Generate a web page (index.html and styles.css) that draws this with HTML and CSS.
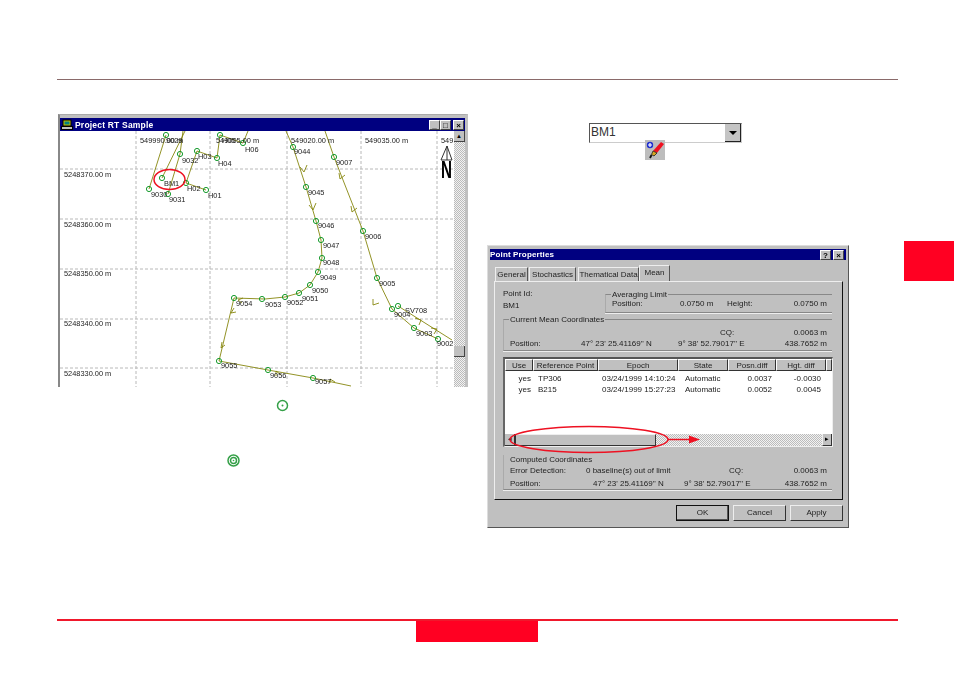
FILE: index.html
```html
<!DOCTYPE html>
<html lang="en">
<head>
<meta charset="utf-8">
<title>Project RT Sample</title>
<link rel="stylesheet" href="styles.css">
</head>
<body>
<div class="page">
  <div class="top-rule"></div>
  <main class="main">
    <section class="left-col">
      <div class="map-window">
        <div class="win-title">
          <svg class="win-icon" viewBox="0 0 12 11"><rect x="2" y="1" width="8" height="6" fill="#c0c000" stroke="#000"/><rect x="3.500" y="2.500" width="5" height="3" fill="#008080"/><rect x="0.500" y="7.500" width="11" height="3" fill="#c0c0c0" stroke="#000"/></svg>
          <span class="win-title-text">Project RT Sample</span>
          <span class="win-btns">
            <span class="win-btn">_</span><span class="win-btn">□</span><span class="win-btn win-close">×</span>
          </span>
        </div>
        <div class="map-body">
          <svg class="map" viewBox="60 131 394 256" width="394" height="256">
            <g class="grid">
              <path d="M60 169H454M60 219H454M60 269H454M60 319H454M60 368H454"/>
              <path d="M136 131V387M210 131V387M287 131V387M361 131V387M437 131V387"/>
            </g>
            <g class="tracks">
              <path d="M149 189L166 135M162 178L185 131M168 194L180 154L183 131M186 183L197 151"/>
              <path d="M186 183L206 190M197 151L217 158L220 135M220 135L243 143L248 131"/>
              <path d="M286 131L293 147L306 187L316 221L321 240L322 258L318 272L310 285L299 293L285 297L265 299L234 298L219 361L268 370L313 378L351 386"/>
              <path d="M325 131L334 157L363 231L377 278L392 309L414 328L438 339M398 306L452 340"/>
              <path d="M300 167l4 5l3-7M309 205l4 5l3-7M339 173l1 6l5-4M351 206l1 6l5-4M373 299l0 6l6-2M415 318l6 2l-2 5M431 328l6 1l-3 5M234 308l-3 5l5-1M222 342l-1 6l4-3M243 298l-5 2l4 3M281 375l-5-4l0 5M335 382l-5-3l0 4"/>
            </g>
            <g class="nodes">
              <circle cx="166" cy="135" r="2.600"/><circle cx="180" cy="154" r="2.600"/><circle cx="197" cy="151" r="2.600"/>
              <circle cx="217" cy="158" r="2.600"/><circle cx="220" cy="135" r="2.600"/><circle cx="243" cy="143" r="2.600"/>
              <circle cx="162" cy="178" r="2.600"/><circle cx="186" cy="183" r="2.600"/><circle cx="206" cy="190" r="2.600"/>
              <circle cx="149" cy="189" r="2.600"/><circle cx="168" cy="194" r="2.600"/><circle cx="293" cy="147" r="2.600"/>
              <circle cx="334" cy="157" r="2.600"/><circle cx="306" cy="187" r="2.600"/><circle cx="316" cy="221" r="2.600"/>
              <circle cx="321" cy="240" r="2.600"/><circle cx="322" cy="258" r="2.600"/><circle cx="363" cy="231" r="2.600"/>
              <circle cx="377" cy="278" r="2.600"/><circle cx="318" cy="272" r="2.600"/><circle cx="310" cy="285" r="2.600"/>
              <circle cx="299" cy="293" r="2.600"/><circle cx="285" cy="297" r="2.600"/><circle cx="262" cy="299" r="2.600"/>
              <circle cx="234" cy="298" r="2.600"/><circle cx="219" cy="361" r="2.600"/><circle cx="268" cy="370" r="2.600"/>
              <circle cx="313" cy="378" r="2.600"/><circle cx="392" cy="309" r="2.600"/><circle cx="398" cy="306" r="2.600"/>
              <circle cx="414" cy="328" r="2.600"/><circle cx="438" cy="339" r="2.600"/>
            </g>
            <g class="labels">
              <text x="64" y="177">5248370.00 m</text><text x="64" y="227">5248360.00 m</text><text x="64" y="276">5248350.00 m</text>
              <text x="64" y="326">5248340.00 m</text><text x="64" y="376">5248330.00 m</text>
              <text x="140" y="143">549990.00 m</text><text x="216" y="143">549005.00 m</text><text x="291" y="143">549020.00 m</text>
              <text x="365" y="143">549035.00 m</text><text x="441" y="143">549</text>
              <text x="166" y="143">9029</text><text x="182" y="163">9032</text><text x="198" y="159">H03</text>
              <text x="218" y="166">H04</text><text x="222" y="143">H05</text><text x="245" y="152">H06</text>
              <text x="164" y="186">BM1</text><text x="187" y="191">H02</text><text x="208" y="198">H01</text>
              <text x="151" y="197">9030</text><text x="169" y="202">9031</text>
              <text x="294" y="154">9044</text><text x="336" y="165">9007</text><text x="308" y="195">9045</text>
              <text x="318" y="228">9046</text><text x="323" y="248">9047</text><text x="323" y="265">9048</text>
              <text x="365" y="239">9006</text><text x="379" y="286">9005</text><text x="320" y="280">9049</text>
              <text x="312" y="293">9050</text><text x="302" y="301">9051</text><text x="287" y="305">9052</text>
              <text x="265" y="307">9053</text><text x="236" y="306">9054</text><text x="221" y="368">9055</text>
              <text x="270" y="378">9056</text><text x="315" y="384">9057</text><text x="394" y="317">9004</text>
              <text x="405" y="313">SV708</text><text x="416" y="336">9003</text><text x="437" y="346">9002</text>
            </g>
            <g class="north">
              <path d="M447 146L441 160H452Z"/>
              <path d="M447 146V160"/>
              <text class="north-n" x="441" y="178" textLength="11" lengthAdjust="spacingAndGlyphs">N</text>
            </g>
            <ellipse class="callout" cx="169.500" cy="179.500" rx="15.500" ry="10"/>
          </svg>
          <div class="v-scroll">
            <span class="sb-btn">▲</span>
            <span class="sb-thumb"></span>
          </div>
        </div>
      </div>
      <svg class="status-icon status-one" viewBox="0 0 13 13"><circle cx="6.500" cy="6.500" r="5" fill="none" stroke="#35a048" stroke-width="1.500"/><circle cx="6.500" cy="6.500" r="1" fill="#35a048"/></svg>
      <svg class="status-icon status-two" viewBox="0 0 13 13"><circle cx="6.500" cy="6.500" r="5.500" fill="none" stroke="#35a048" stroke-width="1.500"/><circle cx="6.500" cy="6.500" r="3" fill="none" stroke="#35a048" stroke-width="1.500"/><circle cx="6.500" cy="6.500" r="0.800" fill="#35a048"/></svg>
    </section>

    <section class="right-col">
      <div class="combo">
        <span class="combo-text">BM1</span>
        <span class="combo-btn"><span class="combo-arrow"></span></span>
      </div>
      <svg class="pen-icon" viewBox="0 0 20 20">
        <rect width="20" height="20" fill="#bdbdbd"/>
        <path d="M16 2L19 4L12 13L8 11Z" fill="#f01020"/>
        <path d="M8 11L12 13L9 16L6.500 14.500Z" fill="#d8a820" stroke="#222" stroke-width="0.800"/>
        <path d="M6.500 15L5 18" stroke="#111" stroke-width="1.800"/>
        <circle cx="5" cy="5" r="3.200" fill="#2030d0"/>
        <path d="M3 5H7M5 3V7" stroke="#fff" stroke-width="1.200"/>
      </svg>

      <div class="dialog">
        <div class="dlg-title">
          <span class="dlg-title-text">Point Properties</span>
          <span class="win-btns dlg-btns"><span class="win-btn">?</span><span class="win-btn win-close">×</span></span>
        </div>
        <div class="tabs">
          <span class="tab tab-general">General</span>
          <span class="tab tab-stoch">Stochastics</span>
          <span class="tab tab-them">Thematical Data</span>
          <span class="tab tab-mean">Mean</span>
        </div>
        <div class="pane">
          <div class="top-row">
            <div class="point-id"><div>Point Id:</div><div>BM1</div></div>
            <div class="group group-avg">
              <span class="legend">Averaging Limit</span>
              <div class="avg-row">
                <span>Position:</span><span>0.0750 m</span><span>Height:</span><span class="num">0.0750 m</span>
              </div>
            </div>
          </div>
          <div class="group group-mean">
            <span class="legend">Current Mean Coordinates</span>
            <div class="coord-grid">
              <span></span><span></span><span class="cq">CQ:</span><span class="num">0.0063 m</span>
              <span>Position:</span><span>47° 23' 25.41169'' N</span><span>9° 38' 52.79017'' E</span><span class="num">438.7652 m</span>
            </div>
          </div>
          <div class="list">
            <div class="list-head">
              <span class="th">Use</span><span class="th">Reference Point</span><span class="th">Epoch</span><span class="th">State</span><span class="th">Posn.diff</span><span class="th">Hgt. diff</span><span class="th"></span>
            </div>
            <div class="list-body">
              <div class="list-row"><span class="c-use">yes</span><span class="c-ref">TP306</span><span class="c-date">03/24/1999 14:10:24</span><span class="c-state">Automatic</span><span class="c-pos">0.0037</span><span class="c-hgt">-0.0030</span></div>
              <div class="list-row"><span class="c-use">yes</span><span class="c-ref">B215</span><span class="c-date">03/24/1999 15:27:23</span><span class="c-state">Automatic</span><span class="c-pos">0.0052</span><span class="c-hgt">0.0045</span></div>
            </div>
            <div class="h-scroll">
              <span class="hs-btn">◂</span><span class="hs-thumb"></span><span class="hs-track"></span><span class="hs-btn hs-right">▸</span>
            </div>
          </div>
          <div class="group group-comp">
            <span class="legend legend-comp">Computed Coordinates</span>
            <div class="coord-grid coord-comp">
              <span>Error Detection:</span><span>0 baseline(s) out of limit</span><span class="cq-comp">CQ:</span><span class="num">0.0063 m</span>
              <span>Position:</span><span class="lat">47° 23' 25.41169'' N</span><span>9° 38' 52.79017'' E</span><span class="num">438.7652 m</span>
            </div>
          </div>
        </div>
        <div class="dlg-buttons">
          <span class="btn btn-default">OK</span><span class="btn">Cancel</span><span class="btn">Apply</span>
        </div>
        <svg class="dlg-callout" viewBox="0 0 200 30" width="200" height="30">
          <ellipse cx="80" cy="14.500" rx="79" ry="13"/>
          <path d="M159 14.500H182"/>
          <path class="arrow-head" d="M180 10.500L191 14.500L180 18.500Z"/>
        </svg>
      </div>
    </section>

    <aside class="side-tab"></aside>
  </main>
  <footer class="footer">
    <div class="bottom-rule"></div>
    <div class="bottom-tab"></div>
  </footer>
</div>
</body>
</html>
```
FILE: styles.css
```css
* { box-sizing: border-box; }
html, body { margin: 0; padding: 0; background: #fff; }
body { font-family: "Liberation Sans", Arial, sans-serif; font-size: 8px; color: #222; overflow: hidden; }
.page { width: 954px; height: 673px; padding-top: 79px; }
.top-rule { height: 1px; margin: 0 56px 0 57px; background: #8a6a6a; }

.main { display: flex; align-items: flex-start; height: 539px; padding: 34px 0 0 58px; }
.left-col { position: relative; width: 410px; flex: none; }
.right-col { width: 362px; margin-left: 19px; flex: none; }
.side-tab { width: 50px; height: 40px; margin: 127px 0 0 55px; background: #ff0022; flex: none; }

/* map window */
.map-window { width: 410px; height: 273px; background: #c0c0c0; border-top: 1px solid #aaa; border-left: 2px solid #888; border-right: 3px solid #c0c0c0; padding-top: 3px; }
.win-title { display: flex; align-items: center; height: 13px; background: #000080; color: #fff; padding-left: 1px; filter: blur(.3px); }
.win-icon { width: 12px; height: 11px; flex: none; }
.win-title-text { margin-left: 2px; font-size: 8.500px; font-weight: bold; letter-spacing: .2px; }
.win-btns { display: flex; margin-left: auto; padding-right: 1px; }
.win-btn { width: 11px; height: 10px; margin-left: 0; background: #c0c0c0; color: #000; font-size: 8px; line-height: 10px; text-align: center; font-weight: bold; border-right: 1px solid #444; border-bottom: 1px solid #444; border-top: 1px solid #fff; border-left: 1px solid #fff; overflow: hidden; }
.win-close { margin-left: 2px; }
.map-body { display: flex; height: 256px; background: #fff; }
.map { display: block; flex: none; filter: blur(.3px); }
.grid path { fill: none; stroke: #b8b8b8; stroke-width: 1; stroke-dasharray: 3 2; }
.tracks path { fill: none; stroke: #808000; stroke-width: 1; opacity: .85; }
.nodes circle { fill: none; stroke: #159a2c; stroke-width: 1; }
.labels text { font-family: "Liberation Sans", Arial, sans-serif; font-size: 7.400px; fill: #222; }
.north path { fill: none; stroke: #333; stroke-width: 1; }
.north-n { font-family: "Liberation Sans", Arial, sans-serif; font-size: 24px; font-weight: bold; fill: #000; }
.callout { fill: none; stroke: #ee1122; stroke-width: 1.500; }
.v-scroll { display: flex; flex-direction: column; width: 11px; height: 256px; background: repeating-conic-gradient(#bbb 0 25%, #f2f2f2 0 50%) 0 0 / 2px 2px; }
.sb-btn { height: 11px; background: #c0c0c0; font-size: 6px; line-height: 10px; text-align: center; color: #000; border-right: 1px solid #444; border-bottom: 1px solid #444; flex: none; }
.sb-thumb { height: 11px; margin-top: 204px; background: #c0c0c0; border-right: 1px solid #444; border-bottom: 1px solid #444; flex: none; }
.status-icon { position: absolute; width: 13px; height: 13px; filter: blur(.3px); }
.status-one { left: 218px; top: 285px; }
.status-two { left: 169px; top: 340px; }

/* combo and tool icon */
.combo { display: flex; width: 153px; height: 20px; margin: 9px 0 0 102px; background: #fff; border: 1px solid #555; border-right-color: #ccc; border-bottom-color: #ccc; }
.combo-text { flex: 1; padding-left: 1px; font-size: 12px; line-height: 17px; color: #333; }
.combo-btn { display: flex; align-items: center; justify-content: center; width: 16px; background: #c4c4c4; border-right: 1px solid #222; border-bottom: 1px solid #222; }
.combo-arrow { width: 0; height: 0; border: 4px solid transparent; border-top: 4px solid #000; border-bottom: 0; }
.pen-icon { display: block; position: relative; width: 20px; height: 20px; margin: -3px 0 0 158px; }

/* dialog */
.dialog { position: relative; width: 362px; height: 283px; margin-top: 85px; background: #c0c0c0; border-top: 1px solid #ddd; border-left: 1px solid #ddd; border-right: 1px solid #555; border-bottom: 1px solid #555; padding: 3px 2px 0 2px; filter: blur(.35px); }
.dlg-title { display: flex; align-items: center; height: 11px; background: #000080; color: #fff; }
.dlg-title-text { font-weight: bold; font-size: 8px; letter-spacing: .15px; }
.dlg-btns { padding-right: 2px; }
.tabs { display: flex; align-items: flex-end; height: 21px; padding-left: 5px; }
.tab { height: 14px; padding-top: 2px; text-align: center; border-top: 1px solid #eee; border-left: 1px solid #eee; border-right: 1px solid #555; }
.tab-general { width: 33px; }
.tab-stoch { width: 47px; margin-left: 1px; }
.tab-them { width: 61px; margin-left: 2px; }
.tab-mean { width: 31px; height: 16px; background: #c0c0c0; }
.pane { width: 349px; height: 219px; margin-left: 4px; border-top: 1px solid #eee; border-left: 1px solid #eee; border-right: 1px solid #111; border-bottom: 1px solid #111; padding: 12px 10px 0 8px; }
.top-row { display: flex; height: 26px; }
.point-id { width: 102px; flex: none; margin-top: -6px; line-height: 12px; }
.group { position: relative; border-top: 1px solid #888; border-bottom: 1px solid #888; border-left: 1px solid #aaa; box-shadow: 0 1px 0 #eee; }
.legend { display: block; width: fit-content; height: 9px; margin: -5px 0 0 5px; padding: 0 1px; line-height: 9px; background: #c0c0c0; }
.group-avg { width: 227px; height: 19px; }
.avg-row { display: grid; grid-template-columns: 68px 47px 40px 1fr; padding: 0 5px 0 6px; line-height: 10px; }
.num { text-align: right; }
.group-mean { height: 32px; margin-top: -1px; }
.coord-grid { display: grid; grid-template-columns: 71px 97px 70px 1fr; grid-auto-rows: 11px; padding: 3px 5px 0 6px; line-height: 11px; }
.cq { padding-left: 42px; }
.list { width: 330px; height: 90px; margin-top: 6px; border-top: 2px solid #555; border-left: 2px solid #666; border-right: 1px solid #eee; border-bottom: 1px solid #eee; background: #fff; display: flex; flex-direction: column; }
.list-head { display: grid; grid-template-columns: 28px 65px 80px 50px 48px 50px 1fr; height: 12px; flex: none; }
.th { background: #c0c0c0; text-align: center; line-height: 11px; border-right: 1px solid #333; border-bottom: 1px solid #333; border-left: 1px solid #fff; border-top: 1px solid #fff; overflow: hidden; }
.list-body { flex: 1; padding-top: 2px; }
.list-row { display: grid; grid-template-columns: 28px 65px 80px 50px 48px 50px; height: 11px; line-height: 11px; }
.c-use { text-align: right; padding-right: 2px; }
.c-ref { padding-left: 5px; }
.c-date { padding-left: 4px; white-space: nowrap; }
.c-state { padding-left: 7px; }
.c-pos { text-align: right; padding-right: 4px; }
.c-hgt { text-align: right; padding-right: 5px; }
.h-scroll { display: flex; height: 12px; flex: none; background: repeating-conic-gradient(#bbb 0 25%, #f2f2f2 0 50%) 0 0 / 2px 2px; }
.hs-btn { width: 10px; flex: none; background: #c0c0c0; text-align: center; line-height: 10px; font-size: 7px; color: #000; border-right: 1px solid #333; border-bottom: 1px solid #333; }
.hs-thumb { width: 141px; flex: none; background: #c0c0c0; border-left: 1px solid #333; border-top: 1px solid #eee; border-right: 1px solid #333; border-bottom: 1px solid #333; }
.hs-track { flex: 1; }
.hs-right { border-left: 1px solid #eee; }
.group-comp { height: 35px; margin-top: 8px; border-top: 0; box-shadow: 0 1px 0 #eee; }
.legend-comp { margin: 0 0 0 6px; padding: 0; line-height: 9px; }
.coord-comp { grid-template-columns: 76px 98px 70px 1fr; grid-auto-rows: 13px; padding-top: 0; line-height: 13px; white-space: nowrap; }
.cq-comp { padding-left: 45px; }
.lat { padding-left: 7px; }
.dlg-buttons { display: flex; gap: 4px; justify-content: flex-end; height: 16px; margin-top: 5px; padding-right: 3px; }
.btn { width: 53px; height: 16px; text-align: center; line-height: 14px; border: 1px solid #eee; border-right-color: #333; border-bottom-color: #333; }
.btn-default { border: 1px solid #111; box-shadow: inset -1px -1px 0 #555; width: 53px; }
.dlg-callout { position: absolute; left: 21px; top: 179px; overflow: visible; }
.dlg-callout ellipse, .dlg-callout path { fill: none; stroke: #ee1122; stroke-width: 1.500; }
.dlg-callout .arrow-head { fill: #ee1122; stroke: none; }

/* footer */
.footer { display: flex; flex-direction: column; align-items: flex-start; }
.bottom-rule { width: 841px; height: 2px; margin-left: 57px; background: #f0182c; }
.bottom-tab { width: 122px; height: 21px; margin-left: 416px; background: #ff0022; }
```
